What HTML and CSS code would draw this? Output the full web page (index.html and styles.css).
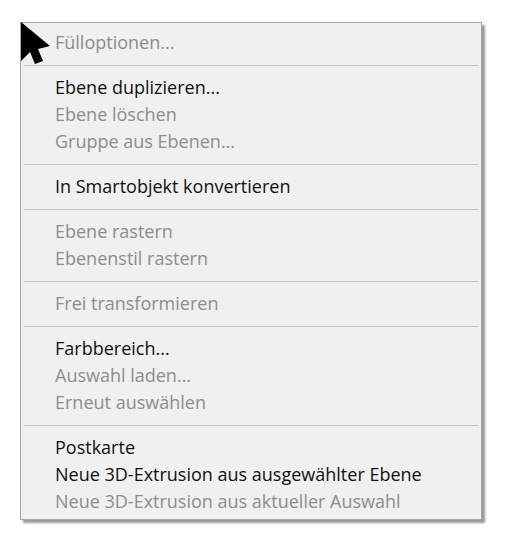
FILE: index.html
```html
<!DOCTYPE html>
<html>
<head>
<meta charset="utf-8">
<link rel="stylesheet" href="styles.css">
</head>
<body>
<div class="menu">
  <div class="item off">Fülloptionen...</div>
  <div class="sep"></div>
  <div class="item">Ebene duplizieren...</div>
  <div class="item off">Ebene löschen</div>
  <div class="item off">Gruppe aus Ebenen...</div>
  <div class="sep"></div>
  <div class="item">In Smartobjekt konvertieren</div>
  <div class="sep"></div>
  <div class="item off">Ebene rastern</div>
  <div class="item off">Ebenenstil rastern</div>
  <div class="sep"></div>
  <div class="item off">Frei transformieren</div>
  <div class="sep"></div>
  <div class="item">Farbbereich...</div>
  <div class="item off">Auswahl laden...</div>
  <div class="item off">Erneut auswählen</div>
  <div class="sep"></div>
  <div class="item">Postkarte</div>
  <div class="item">Neue 3D-Extrusion aus ausgewählter Ebene</div>
  <div class="item off">Neue 3D-Extrusion aus aktueller Auswahl</div>
</div>
<svg class="cursor" width="32" height="44" viewBox="0 0 32 44">
  <polygon points="0,0 0,39 9,30 14,42 22,39 17,27 29,24" fill="#000"/>
</svg>
</body>
</html>
```
FILE: styles.css
```css
html, body {
  margin: 0;
  padding: 0;
  background: #fff;
}
body {
  position: relative;
  width: 510px;
  height: 544px;
  overflow: hidden;
  font-family: "Open Sans", "Noto Sans", sans-serif;
}
.menu {
  margin: 22px 0 0 20px;
  width: 460px;
  background: #f0f0f0;
  border: 1px solid #a5a5a5;
  box-shadow: 3px 3px 2px rgba(0, 0, 0, 0.4);
  padding: 6px 0 4px;
  box-sizing: content-box;
}
.item {
  height: 27px;
  line-height: 27px;
  padding-left: 34px;
  font-size: 18px;
  color: #111;
  white-space: nowrap;
}
.item.off {
  color: #8d8d8d;
}
.sep {
  height: 18px;
  display: flex;
  align-items: center;
  padding: 0 3px 0 3px;
}
.sep::before {
  content: "";
  flex: 1;
  height: 1px;
  background: #c3c3c3;
}
.cursor {
  position: absolute;
  left: 21px;
  top: 22px;
}
```
